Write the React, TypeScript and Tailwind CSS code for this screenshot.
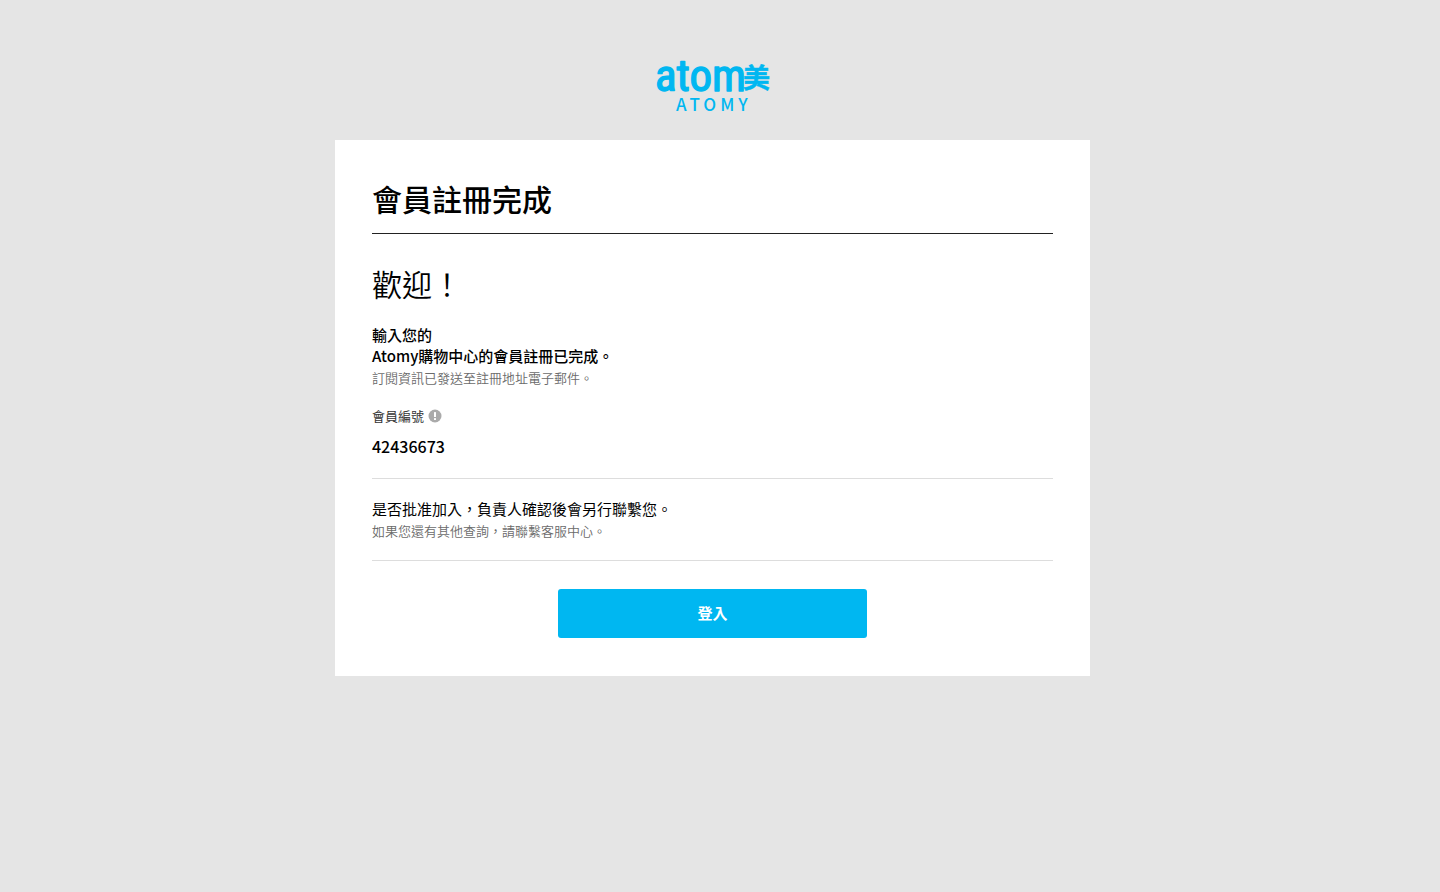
import React from 'react';

const AtomyLogo: React.FC = () => (
  <svg width="116" height="70" viewBox="0 0 116 70" fill="#00b7f1" role="img" aria-label="Atomy">
    <text x="0" y="43" fontSize="45" stroke="#00b7f1" strokeWidth="1.4" strokeLinejoin="round" className="font-['Roboto_Condensed',sans-serif]">
      atom
    </text>
    <text x="88" y="40" fontSize="27" stroke="#00b7f1" strokeWidth="0.5" className="font-['Noto_Sans_CJK_TC',sans-serif] font-bold">
      美
    </text>
    <text x="21" y="63" fontSize="17" className="font-['Noto_Sans_CJK_TC',sans-serif] font-medium tracking-[4px]">
      ATOMY
    </text>
  </svg>
);

const InfoIcon: React.FC = () => (
  <svg width="14" height="14" viewBox="0 0 14 14" aria-hidden="true">
    <circle cx="7" cy="7" r="6.5" fill="#aaaaaa" />
    <rect x="6" y="3" width="2" height="5" rx="0.5" fill="#ffffff" />
    <rect x="6" y="9" width="2" height="2" rx="0.5" fill="#ffffff" />
  </svg>
);

interface NoteProps {
  children: React.ReactNode;
}

const Note: React.FC<NoteProps> = ({ children }) => (
  <p className="mt-0.5 text-[13px] leading-5 font-[350] text-[#6b6b6b]">{children}</p>
);

const App: React.FC = () => {
  const memberNo = '42436673';

  return (
    <div
      lang="zh-Hant"
      className="flex min-h-screen flex-col items-center bg-[#e5e5e5] pt-12 pr-[15px] font-['Noto_Sans_CJK_TC',sans-serif] text-black"
    >
      <header>
        <AtomyLogo />
      </header>

      <main className="mt-[22px] w-full max-w-[755px] bg-white px-[37px] pt-9 pb-[38px]">
        <h1 className="border-b border-[#222222] pb-3 text-[30px] leading-[45px] font-medium">
          會員註冊完成
        </h1>

        <section className="border-b border-[#dddddd] pt-[27px] pb-5">
          <h2 className="text-[30px] leading-[45px] font-[350]">歡迎！</h2>
          <p className="mt-[18px] text-[15px] leading-[21px] font-medium">
            輸入您的
            <br />
            Atomy購物中心的會員註冊已完成。
          </p>
          <Note>訂閱資訊已發送至註冊地址電子郵件。</Note>

          <dl className="mt-[18px]">
            <dt className="flex items-center gap-1 text-[13px] leading-5 text-[#333333]">
              會員編號
              <InfoIcon />
            </dt>
            <dd className="mt-2 text-base font-medium">{memberNo}</dd>
          </dl>
        </section>

        <section className="border-b border-[#dddddd] pt-[19px] pb-[19px]">
          <p className="text-[15px] leading-[21px]">是否批准加入，負責人確認後會另行聯繫您。</p>
          <Note>如果您還有其他查詢，請聯繫客服中心。</Note>
        </section>

        <button
          type="button"
          className="mx-auto mt-7 block h-[49px] w-full max-w-[309px] rounded-[3px] bg-[#00b7f1] text-[15px] font-bold text-white"
        >
          登入
        </button>
      </main>
    </div>
  );
};

export default App;
